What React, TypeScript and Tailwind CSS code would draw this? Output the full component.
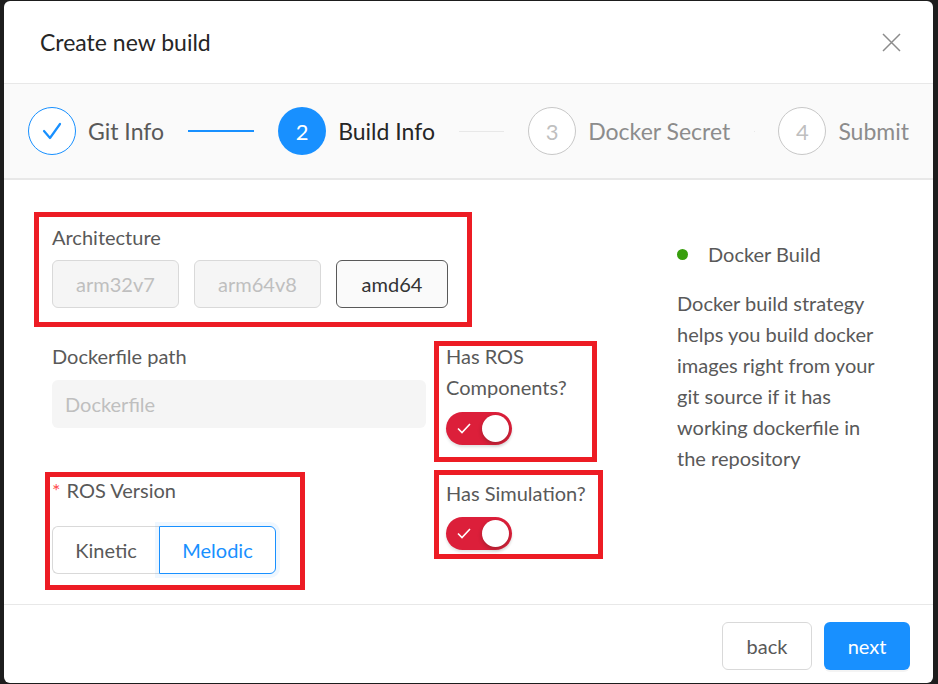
import { Fragment } from 'react'

// ─── Data ─────────────────────────────────────────────────────────────────────

type StepStatus = 'finish' | 'process' | 'wait'

const steps: { n: number; title: string; status: StepStatus }[] = [
  { n: 1, title: 'Git Info', status: 'finish' },
  { n: 2, title: 'Build Info', status: 'process' },
  { n: 3, title: 'Docker Secret', status: 'wait' },
  { n: 4, title: 'Submit', status: 'wait' },
]

const architectures = [
  { label: 'arm32v7', width: 'w-[127px]', active: false },
  { label: 'arm64v8', width: 'w-[127px]', active: false },
  { label: 'amd64', width: 'w-[112px]', active: true },
]

const description = [
  'Docker build strategy',
  'helps you build docker',
  'images right from your',
  'git source if it has',
  'working dockerfile in',
  'the repository',
]

// ─── Bits ─────────────────────────────────────────────────────────────────────

function StepIcon({ n, status }: { n: number; status: StepStatus }) {
  if (status === 'finish') {
    return (
      <div className="flex h-12 w-12 shrink-0 items-center justify-center rounded-full border border-[#1890ff] bg-white">
        <svg width="20" height="18" viewBox="0 0 20 18">
          <polyline
            points="2,9 8,16 18,2"
            fill="none"
            stroke="#1890ff"
            strokeWidth="2.2"
            strokeLinecap="round"
            strokeLinejoin="round"
          />
        </svg>
      </div>
    )
  }
  if (status === 'process') {
    return (
      <div className="flex h-12 w-12 shrink-0 items-center justify-center rounded-full bg-[#1890ff] text-[22px] text-white">
        {n}
      </div>
    )
  }
  return (
    <div className="flex h-12 w-12 shrink-0 items-center justify-center rounded-full border border-[#c8c8c8] bg-white text-[22px] text-[#bfbfbf]">
      {n}
    </div>
  )
}

function Switch() {
  return (
    <div className="flex h-[33px] w-[66px] items-center justify-between rounded-full bg-[#dc1f3a] shadow-[0_2px_3px_rgba(0,0,0,0.12)]">
      <svg className="ml-[11px]" width="14" height="11" viewBox="0 0 14 11">
        <polyline points="1,5.5 5,9.5 13,1" fill="none" stroke="white" strokeWidth="1.6" />
      </svg>
      <span className="mr-[3px] h-[27px] w-[27px] rounded-full bg-white shadow-[0_2px_4px_rgba(0,35,11,0.25)]" />
    </div>
  )
}

// ─── Component ────────────────────────────────────────────────────────────────

export default function App() {
  return (
    <div
      className="h-[684px] w-[938px] overflow-hidden bg-[#1d1d1d] pl-[4px] pt-px"
      style={{ fontFamily: 'Lato, "Noto Sans", sans-serif' }}
    >
      <div className="flex h-[682px] w-[929px] flex-col overflow-hidden rounded-[6px] bg-white">
        {/* Header */}
        <div className="flex h-[83px] shrink-0 items-center justify-between border-b border-[#e8e8e8] pl-[36px] pr-[32px]">
          <h1 className="text-[23px] text-[#262626]">Create new build</h1>
          <svg width="19" height="19" viewBox="0 0 19 19">
            <path d="M1 1L18 18M18 1L1 18" stroke="#8c8c8c" strokeWidth="1.5" />
          </svg>
        </div>

        {/* Steps */}
        <div className="flex h-[96px] shrink-0 items-center border-b-2 border-[#e8e8e8] bg-[#fafafa] px-6">
          {steps.map((step, i) => {
            const last = i === steps.length - 1
            return (
              <div key={step.n} className={last ? 'flex flex-none items-center' : 'mr-6 flex flex-1 items-center'}>
                <StepIcon n={step.n} status={step.status} />
                <span
                  className={
                    step.status === 'process'
                      ? 'ml-3 whitespace-nowrap text-[23px] text-[#262626]'
                      : step.status === 'finish'
                        ? 'ml-3 whitespace-nowrap text-[23px] text-[#595959]'
                        : 'ml-3 whitespace-nowrap text-[23px] text-[#8c8c8c]'
                  }
                >
                  {step.title}
                </span>
                {!last && (
                  <span
                    className={
                      step.status === 'finish'
                        ? 'ml-6 h-[1.5px] flex-1 bg-[#1890ff]'
                        : 'ml-6 h-px flex-1 bg-[#e8e8e8]'
                    }
                  />
                )}
              </div>
            )
          })}
        </div>

        {/* Body */}
        <div className="flex flex-1 pl-[30px] pt-[32px] text-[20px] leading-[31px]">
          {/* Form */}
          <div className="flex w-[643px] shrink-0 flex-col">
            {/* Architecture */}
            <div className="h-[115px] w-[438px] border-[5px] border-[#ed1c24] pl-[13px] pt-[5px]">
              <div className="text-[#595959]">Architecture</div>
              <div className="mt-[7px] flex gap-[15px]">
                {architectures.map((a) => (
                  <div
                    key={a.label}
                    className={
                      a.active
                        ? `flex h-12 ${a.width} items-center justify-center rounded-[6px] border border-[#595959] bg-[#fafafa] text-[#333333]`
                        : `flex h-12 ${a.width} items-center justify-center rounded-[6px] border border-[#d9d9d9] bg-[#f5f5f5] text-[#bfbfbf]`
                    }
                  >
                    {a.label}
                  </div>
                ))}
              </div>
            </div>

            {/* Dockerfile path + ROS components */}
            <div className="mt-[14px] flex items-start">
              <div className="w-[400px] shrink-0 pl-[18px]">
                <div className="text-[#595959]">Dockerfile path</div>
                <div className="mt-[8px] flex h-12 w-[374px] items-center rounded-[6px] bg-[#f5f5f5] pl-[13px] text-[#bfbfbf]">
                  Dockerfile
                </div>
              </div>
              <div className="h-[121px] w-[163px] border-[5px] border-[#ed1c24] pl-[7px]">
                <div className="-mt-[5px] text-[#595959]">
                  Has ROS
                  <br />
                  Components?
                </div>
                <div className="mt-[9px]">
                  <Switch />
                </div>
              </div>
            </div>

            {/* ROS version + simulation */}
            <div className="mt-[8px] flex items-start">
              <div className="w-[400px] shrink-0 pl-[11px] pt-[2px]">
                <div className="h-[118px] w-[260px] border-[5px] border-[#ed1c24] pl-[2px]">
                  <div className="-mt-[2px] flex text-[#595959]">
                    <span className="mr-[6px] text-[#ff4d4f]">*</span>
                    ROS Version
                  </div>
                  <div className="mt-[20px] flex">
                    <div className="flex h-12 w-[107px] items-center justify-center rounded-l-[6px] border border-r-0 border-[#d9d9d9] text-[#595959]">
                      Kinetic
                    </div>
                    <div className="flex h-12 w-[117px] items-center justify-center rounded-r-[6px] border border-[#1890ff] text-[#1890ff] shadow-[0_0_0_4px_rgba(24,144,255,0.07)]">
                      Melodic
                    </div>
                  </div>
                </div>
              </div>
              <div className="h-[89px] w-[169px] border-[5px] border-[#ed1c24] pl-[7px]">
                <div className="mt-[3px] text-[#595959]">Has Simulation?</div>
                <div className="mt-[8px]">
                  <Switch />
                </div>
              </div>
            </div>
          </div>

          {/* Info */}
          <div className="mt-[27px] flex flex-col text-[#595959]">
            <div className="flex items-center">
              <span className="h-[11px] w-[11px] shrink-0 rounded-full bg-[#389e0d]" />
              <span className="ml-[20px]">Docker Build</span>
            </div>
            <p className="mt-[18px]">
              {description.map((line, i) => (
                <Fragment key={line}>
                  {line}
                  {i < description.length - 1 && <br />}
                </Fragment>
              ))}
            </p>
          </div>
        </div>

        {/* Footer */}
        <div className="flex h-[79px] shrink-0 items-start justify-end gap-3 border-t border-[#e8e8e8] pr-[23px] pt-[17px] text-[20px]">
          <button
            type="button"
            className="flex h-12 w-[90px] items-center justify-center rounded-[6px] border border-[#d9d9d9] bg-white text-[#595959]"
          >
            back
          </button>
          <button
            type="button"
            className="flex h-12 w-[86px] items-center justify-center rounded-[6px] bg-[#1890ff] text-white shadow-[0_2px_0_rgba(0,0,0,0.045)]"
          >
            next
          </button>
        </div>
      </div>
    </div>
  )
}
